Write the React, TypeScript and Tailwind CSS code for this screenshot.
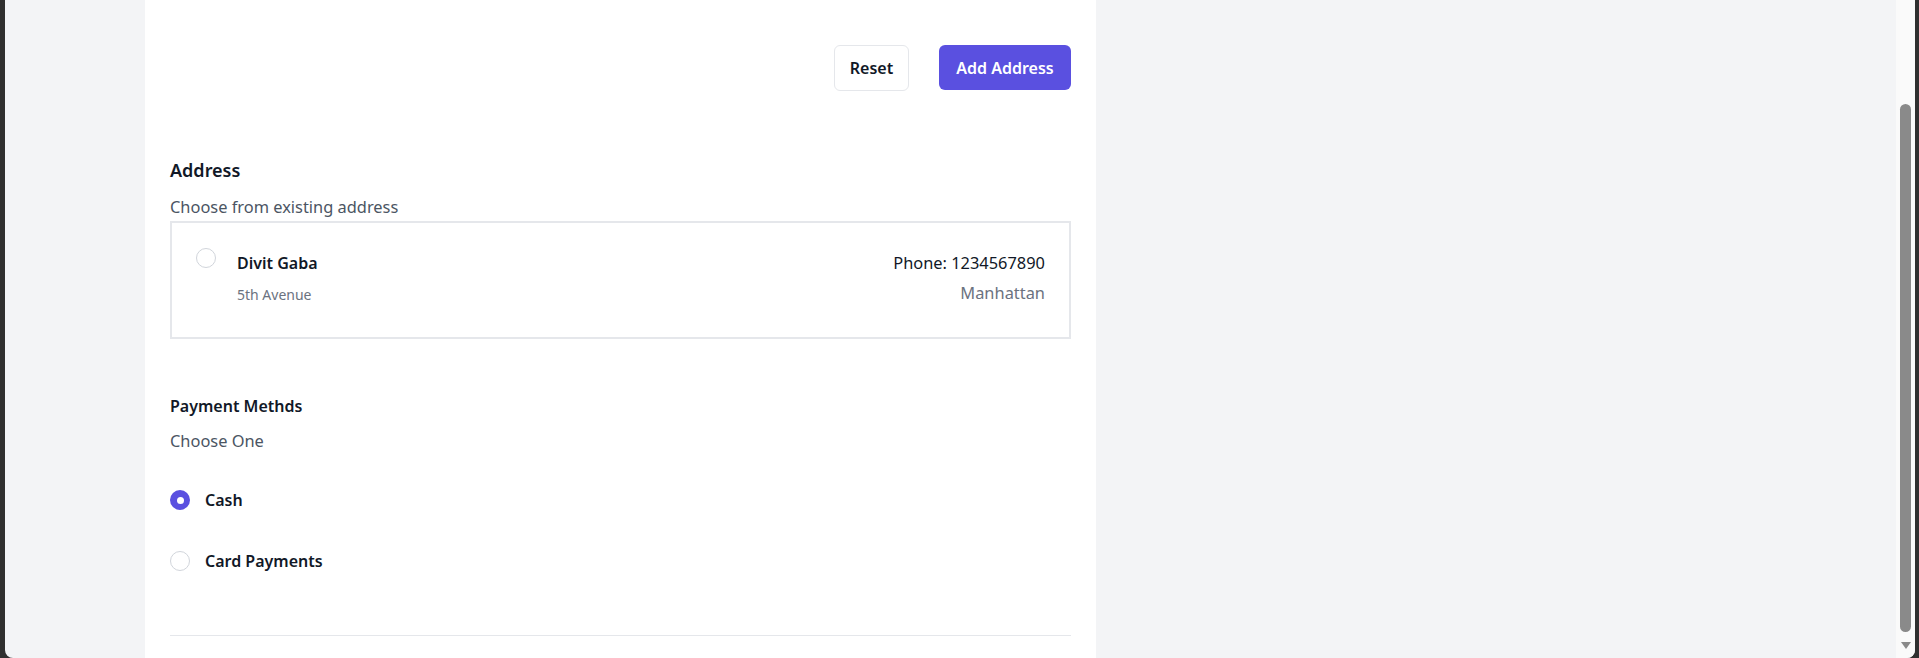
import React from "react";

function Radio({ checked }: { checked?: boolean }) {
  if (checked) {
    return (
      <span className="flex h-5 w-5 shrink-0 items-center justify-center rounded-full bg-[#5a50e0]">
        <span className="h-[7px] w-[7px] rounded-full bg-white" />
      </span>
    );
  }
  return <span className="block h-5 w-5 shrink-0 rounded-full border border-[#d1d5db] bg-white" />;
}

export default function App() {
  return (
    <div
      className="flex h-[658px] w-[1919px] overflow-hidden bg-[#2f2f2f] pl-[5px] pr-[4px]"
      style={{ fontFamily: '"Noto Sans", "Open Sans", sans-serif' }}
    >
      <div className="flex flex-1 overflow-hidden rounded-b-[8px] bg-[#f3f4f6]">
        <div className="flex-1 pl-[140px]">
          <div className="h-full w-[951px] bg-white px-[25px] pt-[45px]">
            {/* actions */}
            <div className="flex justify-end gap-[30px]">
              <button className="h-[46px] w-[75px] rounded-md border border-[#e5e7eb] bg-white text-[16px] font-semibold text-[#111827]">
                Reset
              </button>
              <button className="h-[45px] w-[132px] rounded-md bg-[#5a50e0] text-[16px] font-semibold text-white">
                Add Address
              </button>
            </div>

            {/* address */}
            <h2 className="mt-[65px] text-[18px] font-semibold leading-7 text-[#111827]">Address</h2>
            <p className="mt-[11px] text-[16.4px] leading-6 text-[#4b5563]">Choose from existing address</p>
            <div className="mt-[2px] flex h-[118px] items-start justify-between border-2 border-[#e5e7eb] p-6">
              <div className="flex items-start gap-5">
                <div className="mt-px">
                  <Radio />
                </div>
                <div className="mt-1 pl-px">
                  <p className="text-[16px] font-semibold leading-6 text-[#111827]">Divit Gaba</p>
                  <p className="mt-[10px] text-[14px] leading-5 text-[#6b7280]">5th Avenue</p>
                </div>
              </div>
              <div className="mt-1 text-right">
                <p className="text-[16.4px] leading-6 text-[#111827]">Phone: 1234567890</p>
                <p className="mt-[6px] text-[16.4px] leading-6 text-[#6b7280]">Manhattan</p>
              </div>
            </div>

            {/* payment */}
            <h3 className="mt-[55px] text-[16px] font-semibold leading-6 text-[#111827]">Payment Methds</h3>
            <p className="mt-[11px] text-[16.4px] leading-6 text-[#4b5563]">Choose One</p>
            <div className="mt-[35px] flex items-center gap-[15px]">
              <Radio checked />
              <span className="text-[16px] font-semibold leading-6 text-[#111827]">Cash</span>
            </div>
            <div className="mt-[37px] flex items-center gap-[15px]">
              <Radio />
              <span className="text-[16px] font-semibold leading-6 text-[#111827]">Card Payments</span>
            </div>
            <div className="mt-[62px] h-px bg-[#e5e7eb]" />
          </div>
        </div>

        {/* scrollbar */}
        <div className="flex w-[19px] flex-col items-center bg-[#fafafa] pt-[104px]">
          <div className="h-[528px] w-[11px] rounded-full bg-[#8a8a8a]" />
          <svg className="mt-[10px]" width="10" height="8" viewBox="0 0 10 8">
            <path d="M0 0 L10 0 L5 7 Z" fill="#8a8a8a" />
          </svg>
        </div>
      </div>
    </div>
  );
}
